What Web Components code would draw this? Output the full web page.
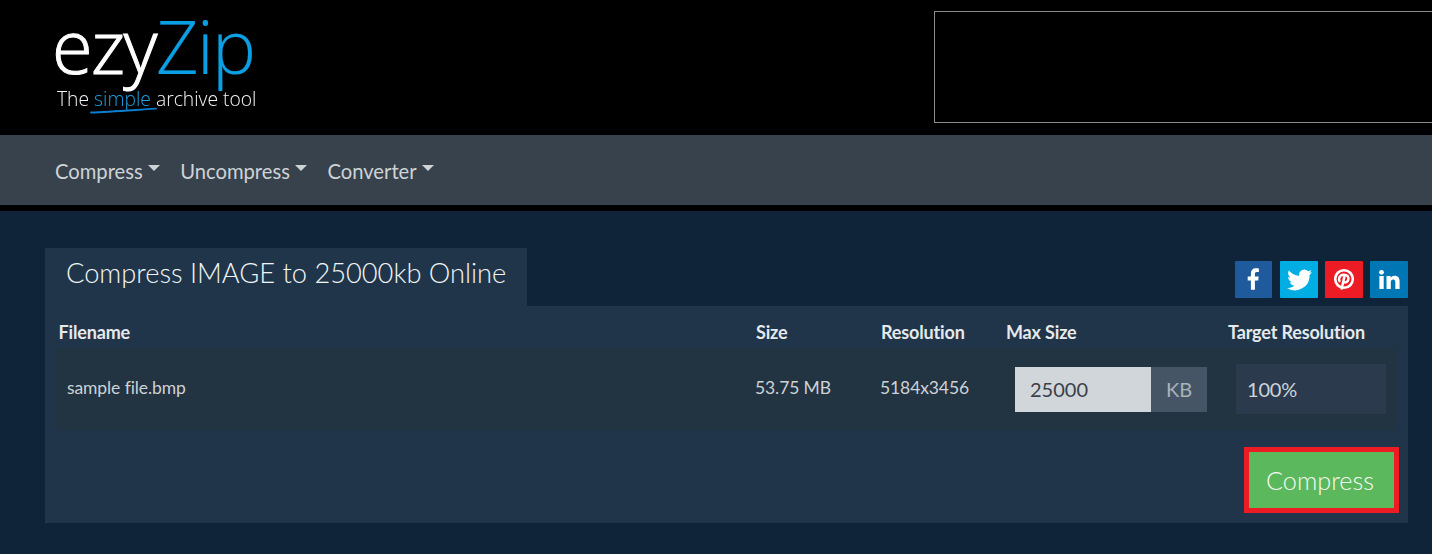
<!DOCTYPE html>
<html><head><meta charset="utf-8"><title>ezyZip</title>
<style>
html,body{margin:0;padding:0;background:#0f2438;font-family:Lato,"Liberation Sans",sans-serif}
body{width:1432px;height:554px;overflow:hidden}
</style></head><body>
<ezy-header></ezy-header>
<ezy-nav><nav-item>Compress</nav-item><nav-item>Uncompress</nav-item><nav-item>Converter</nav-item></ezy-nav>
<ezy-main></ezy-main>
<script>
function def(name,html){customElements.define(name,class extends HTMLElement{constructor(){super();this.attachShadow({mode:'open'}).innerHTML=html}})}
def('ezy-header',`<style>
:host{display:flex;height:135px;background:#000;overflow:hidden;justify-content:space-between;align-items:flex-start}
.logo{margin-left:55px;padding-top:8px;width:300px;position:relative;will-change:transform}
.name{font:300 74px/76px "Open Sans",sans-serif;letter-spacing:-1.6px;color:#fff;height:76px;margin-left:-3px;-webkit-text-stroke:1px #fff}
.name span{color:#0b9fe3;-webkit-text-stroke:.2px #0b9fe3}
.tag{font:300 19.300px/24px "Open Sans",sans-serif;color:#f4f4f4;margin-left:2px;margin-top:3px;white-space:pre}
.tag span{color:#1ea0e0}
svg{position:absolute;left:35px;top:104px}
.ad{margin-top:11px;width:520px;height:110px;border:1px solid #8c8c8c;flex:none;margin-right:-24px}
</style>
<div class="logo"><div class="name">ezy<span>Zip</span></div><div class="tag">The <span>simple</span> archive tool</div>
<svg width="70" height="10" viewBox="0 0 70 10"><path d="M1 8.500C18 8 30 7 66 4.600" stroke="#0a7fd0" stroke-width="1.800" fill="none" stroke-linecap="round"/></svg></div>
<div class="ad"></div>`);
def('ezy-nav',`<style>
:host{display:flex;gap:20.500px;align-items:center;height:70px;padding-left:55px;background:#37424c;border-bottom:6px solid #000}
</style><slot></slot>`);
def('nav-item',`<style>
:host{display:inline-flex;align-items:center;font:400 20.200px/26px Lato,sans-serif;color:#ced3d7;padding-top:1px}
i{display:inline-block;margin-left:5px;margin-top:-6px;border-top:6px solid #ced3d7;border-left:6px solid transparent;border-right:6px solid transparent}
</style><slot></slot><i></i>`);
def('ezy-main',`<style>
:host{display:block;padding:37px 24px 0 45px}
.top{display:flex;justify-content:space-between;align-items:flex-end}
h1{margin:0;height:58px;box-sizing:border-box;padding:7px 21px 0;background:#203549;font:300 27.250px/36px Lato,sans-serif;color:#f2f5f7;white-space:nowrap}
.soc{display:flex;gap:7px;margin-bottom:8px}
.panel{background:#203549;height:217px;padding:0 12px;box-sizing:border-box}
ezy-table{display:block}
.foot{display:flex;justify-content:flex-end;margin:17px -3px 0 0}
.btn{box-sizing:border-box;width:155px;height:66px;border:5px solid #ed1c24;background:#5cb85c;color:#f4fbf4;font:300 25.250px/56px Lato,sans-serif;text-align:center;padding-right:3px}
</style>
<div class="top"><h1>Compress IMAGE to 25000kb Online</h1>
<div class="soc"><soc-icon style="background:#1f5a9c;margin-right:1px"><svg viewBox="0 0 37 37" width="37" height="37"><path fill="#fff" transform="translate(.7 -.3)" d="M15.200 29V19.700H12v-3.900h3.200V13c0-3.500 2-5.400 5-5.400 1.400 0 2.700.1 3 .2v3.500h-2c-1.600 0-2 .8-2 2v2.500h3.800l-.5 3.900h-3.300V29z"/></svg></soc-icon>
<soc-icon style="background:#00aee3;width:38px"><svg viewBox="0 0 38 37" width="38" height="37"><path fill="#fff" transform="translate(1.900 2.300) scale(.86)" d="M35 10.200c-1.100.5-2.300.8-3.400.9 1.200-.7 2.200-1.900 2.600-3.300-1.200.7-2.400 1.200-3.800 1.500a6 6 0 0 0-10.200 5.400C15.300 14.500 10.900 12.100 8 8.500c-1.600 2.800-.8 6.300 1.900 8.100-1 0-1.900-.3-2.700-.7 0 2.900 2 5.400 4.800 6-.9.2-1.800.3-2.700.1.800 2.400 3 4.100 5.600 4.200A12 12 0 0 1 6 28.600 17 17 0 0 0 32.200 13.500c1.100-.8 2.100-2 2.800-3.300z"/></svg></soc-icon>
<soc-icon style="background:#ed1c24;width:38px"><svg viewBox="0 0 38 37" width="38" height="37"><circle cx="19" cy="18" r="8.800" fill="none" stroke="#fff" stroke-width="2.600"/><path fill="none" stroke="#fff" stroke-width="2.500" d="M15 21c-2-2.500-1-7 3.500-7.300 4-.2 5.800 2.500 4.600 5.600-.9 2.300-3.400 2.800-4.700 1.200M19.500 15l-3 13.500"/></svg></soc-icon>
<soc-icon style="background:#0077b5;width:38px"><svg viewBox="0 0 38 37" width="38" height="37"><g fill="#fff"><circle cx="11.500" cy="11.300" r="2.400"/><rect x="9.400" y="15" width="4.300" height="13"/><path d="M16.500 15h4.100v1.800c.8-1.300 2.200-2.100 4-2.100 3.700 0 5 2.300 5 5.900V28h-4.300v-6.600c0-1.800-.5-3-2.100-3-1.700 0-2.400 1.300-2.400 3V28h-4.300z"/></g></svg></soc-icon></div></div>
<div class="panel"><ezy-table></ezy-table><div class="foot"><div class="btn">Compress</div></div></div>`);
def('soc-icon',`<style>:host{display:block;width:37px;height:37px;border-radius:1px;overflow:hidden}svg{display:block}</style><slot></slot>`);
def('ezy-table',`<style>
:host{display:block;color:#e9ecef;font-family:Lato,sans-serif}
.g{display:grid;grid-template-columns:697px 125px 125px 222px 168px}
.head{height:42px;box-sizing:border-box;padding:10px 0 0 2px;align-items:center;font:700 18px/20px Lato,sans-serif;letter-spacing:-.16px;color:#e6e9ec}
.head>div:first-child{margin-left:-.5px}
.row{height:82px;background:#223342;align-items:center;padding-left:10px;grid-template-columns:688px 125px 135px 221px 150px;font:400 17.500px/20px Lato,sans-serif;letter-spacing:-.1px;color:#cdd2d6}
.row>div:not(.inp):not(.pct){margin-top:-3px}
.inp{display:flex;height:45px;width:192px;letter-spacing:0}
.val{width:136px;background:#d1d6db;color:#3a4149;font:400 20px/45px Lato,sans-serif;padding-left:15px;box-sizing:border-box}
.unit{flex:1;background:#465565;color:#a9b2ba;font:400 20px/45px Lato,sans-serif;text-align:center}
.pct{height:50px;width:150px;box-sizing:border-box;background:#2b3a4c;padding-left:11px;color:#cfd3d7;font:400 20px/50px Lato,sans-serif;letter-spacing:-.2px}
</style>
<div class="g head"><div>Filename</div><div>Size</div><div>Resolution</div><div>Max Size</div><div>Target Resolution</div></div>
<div class="g row"><div>sample file.bmp</div><div>53.75 MB</div><div>5184x3456</div><div class="inp"><div class="val">25000</div><div class="unit">KB</div></div><div class="pct">100%</div></div>`);
</script>
</body></html>
